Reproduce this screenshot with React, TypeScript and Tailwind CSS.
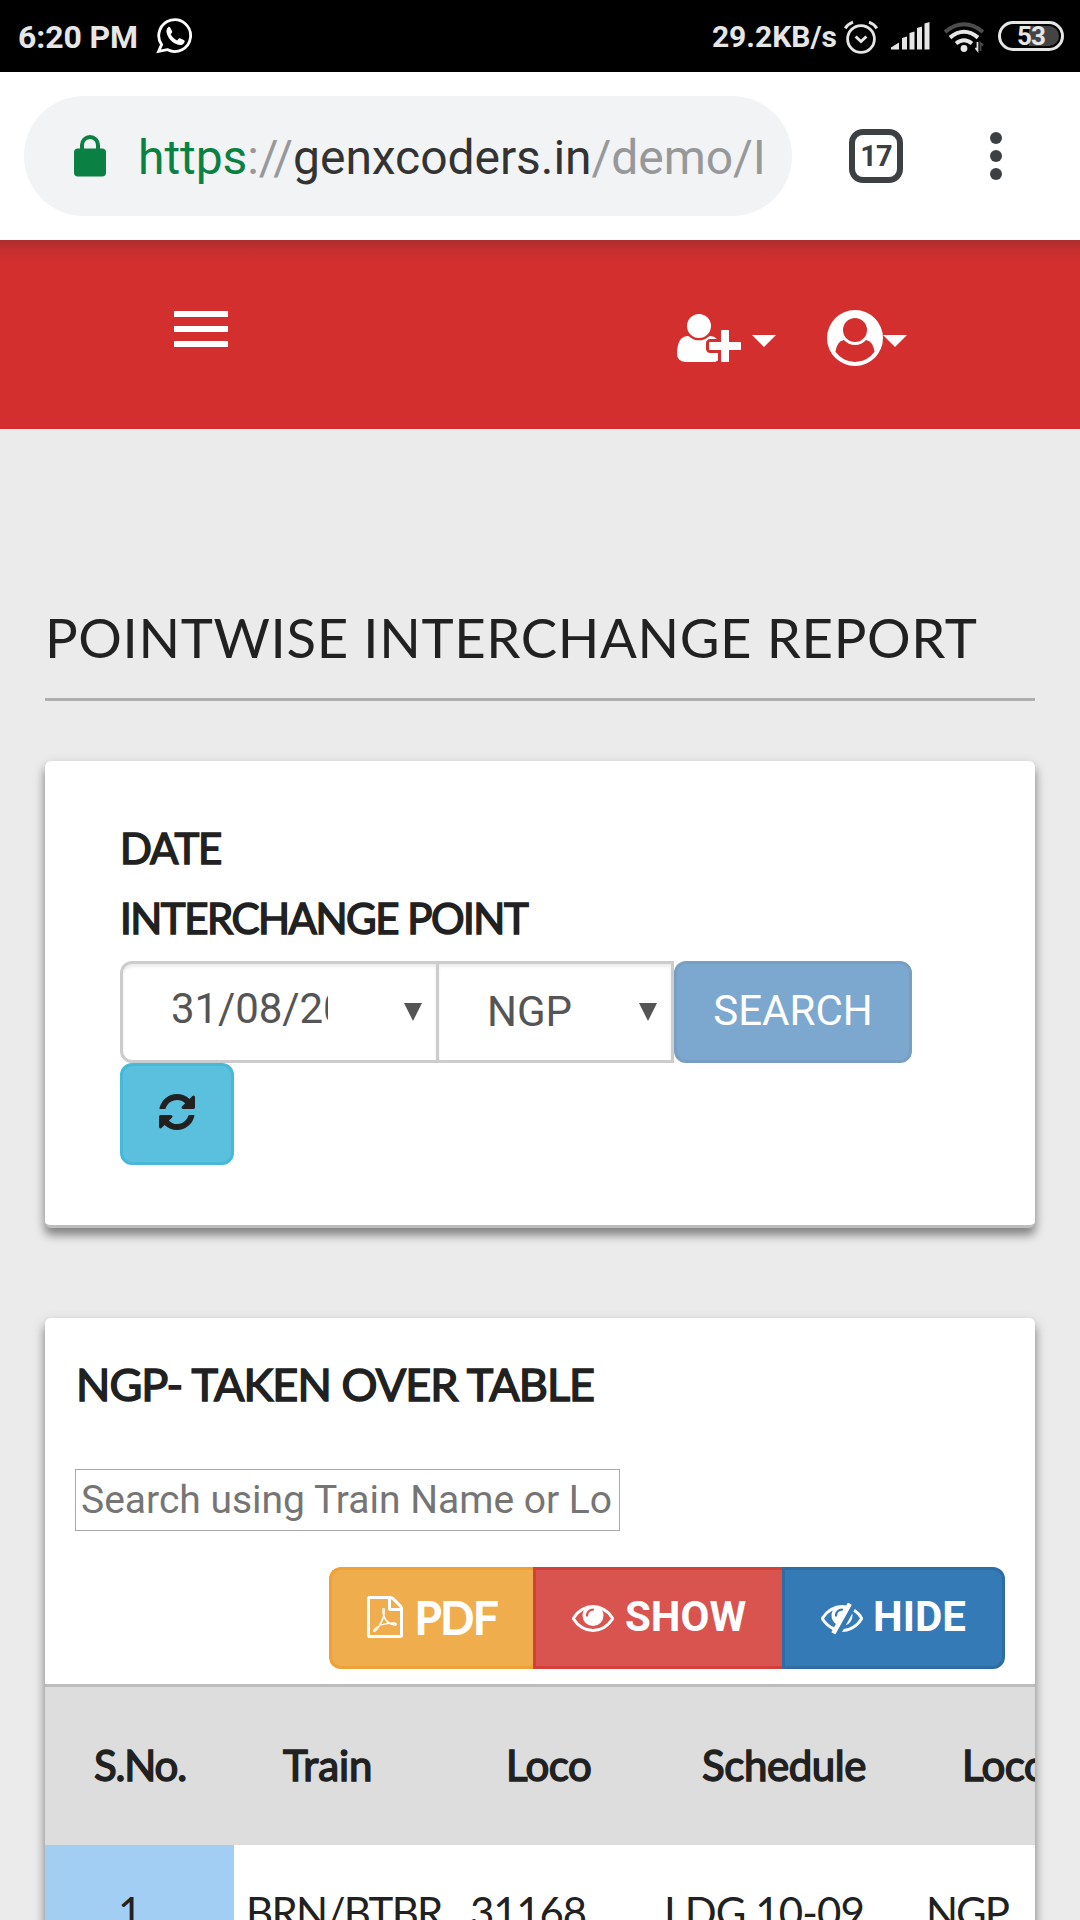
import React from "react";

const ICONS = {
  userPlus:
    "M704 896q-159 0-271.5-112.5t-112.5-271.5 112.5-271.5 271.5-112.5 271.5 112.5 112.5 271.5-112.5 271.5-271.5 112.5zm960 128h352q13 0 22.5 9.5t9.5 22.5v192q0 13-9.5 22.5t-22.5 9.5h-352v352q0 13-9.5 22.5t-22.5 9.5h-192q-13 0-22.5-9.5t-9.5-22.5v-352h-352q-13 0-22.5-9.5t-9.5-22.5v-192q0-13 9.5-22.5t22.5-9.5h352v-352q0-13 9.5-22.5t22.5-9.5h192q13 0 22.5 9.5t9.5 22.5v352zm-736 224q0 52 38 90t90 38h256v238q-68 50-171 50h-874q-121 0-194-69t-73-190q0-53 3.5-103.5t14-109 26.5-108.5 43-97.5 62-81 85.5-53.5 111.5-20q19 0 39 17 79 61 154.5 91.5t164.5 30.5 164.5-30.5 154.5-91.5q20-17 39-17 132 0 217 96h-223q-52 0-90 38t-38 90v192z",
  userCircle:
    "M1523 1339q-22-155-87.5-257.5t-184.5-118.5q-67 74-159.5 115.5t-195.5 41.5-195.5-41.5-159.5-115.5q-119 16-184.5 118.5t-87.5 257.5q106 150 271 237.5t356 87.5 356-87.5 271-237.5zm-243-699q0-159-112.5-271.5t-271.5-112.5-271.5 112.5-112.5 271.5 112.5 271.5 271.5 112.5 271.5-112.5 112.5-271.5zm512 256q0 182-71 347.5t-190.5 286-285.5 191.5-349 71q-182 0-348-71t-286-191-191-286-71-348 71-348 191-286 286-191 348-71 348 71 286 191 191 286 71 348z",
  refresh:
    "M1639 1056q0 5-1 7-64 268-268 434.5t-478 166.5q-146 0-282.5-55t-243.5-157l-129 129q-19 19-45 19t-45-19-19-45v-448q0-26 19-45t45-19h448q26 0 45 19t19 45-19 45l-137 137q71 66 161 102t187 36q134 0 250-65t186-179q11-17 53-117 8-23 30-23h192q13 0 22.5 9.5t9.5 22.5zm25-800v448q0 26-19 45t-45 19h-448q-26 0-45-19t-19-45 19-45l138-138q-148-137-349-137-134 0-250 65t-186 179q-11 17-53 117-8 23-30 23h-199q-13 0-22.5-9.5t-9.5-22.5v-7q65-268 270-434.5t480-166.5q146 0 284 55.5t245 156.5l130-129q19-19 45-19t45 19 19 45z",
  eye: "M1664 960q-152-236-381-353 61 104 61 225 0 185-131.5 316.5t-316.5 131.5-316.5-131.5-131.5-316.5q0-121 61-225-229 117-381 353 133 205 333.5 326.5t434.5 121.5 434.5-121.5 333.5-326.5zm-720-384q0-20-14-34t-34-14q-125 0-214.5 89.5t-89.5 214.5q0 20 14 34t34 14 34-14 14-34q0-86 61-147t147-61q20 0 34-14t14-34zm848 384q0 34-20 69-140 230-376.5 368.5t-499.5 138.5-499.5-139-376.5-368q-20-35-20-69t20-69q140-229 376.5-368t499.5-139 499.5 139 376.5 368q20 35 20 69z",
  eyeSlash:
    "M555 1335l78-141q-87-63-136-159t-49-203q0-121 61-225-229 117-381 353 167 258 427 375zm389-759q0-20-14-34t-34-14q-125 0-214.5 89.5t-89.5 214.5q0 20 14 34t34 14 34-14 14-34q0-86 61-147t147-61q20 0 34-14t14-34zm363-191q0 7-1 9-106 189-316 567t-315 566l-49 89q-10 16-28 16-12 0-134-70-16-10-16-28 0-12 44-87-143-65-263.5-173t-208.5-245q-20-31-20-69t20-69q153-235 380-371t496-136q89 0 180 17l54-97q10-16 28-16 5 0 18 6t31 15.5 33 18.5 31.5 18.5 19.5 11.5q16 10 16 27zm37 447q0 139-79 253.5t-209 164.5l280-502q8 45 8 84zm448 128q0 35-20 69-39 64-109 145-150 172-347.5 267t-419.5 95l74-132q212-18 392.5-137t301.5-307q-115-179-282-294l63-112q95 64 182.5 153t144.5 184q20 34 20 69z",
  pdf: "M1596 380q28 28 48 76t20 88v1152q0 40-28 68t-68 28h-1344q-40 0-68-28t-28-68v-1600q0-40 28-68t68-28h896q40 0 88 20t76 48zm-444-244v376h376q-10-29-22-41l-313-313q-12-12-41-22zm384 1528v-1024h-416q-40 0-68-28t-28-68v-416h-768v1536h1280zm-514-593q33 26 84 56 59-7 117-7 147 0 177 49 16 22 2 52 0 1-1 2l-2 2v1q-6 38-71 38-48 0-115-20t-130-53q-221 24-392 83-153 262-242 262-15 0-28-7l-24-12q-1-1-6-5-10-10-6-36 9-40 56-91.5t132-96.5q14-9 23 6 2 2 2 4 52-85 107-197 68-136 104-262-24-82-30.5-159.5t6.5-127.5q11-40 42-40h22q23 0 35 15 18 21 9 68-2 6-4 8 1 3 1 8v30q-2 123-14 192 55 164 146 238zm-576 411q52-24 137-158-51 40-87.5 84t-49.5 74zm398-920q-15 42-2 132 1-7 7-44 0-3 7-43 1-4 4-8-1-1-1-2-1-2-1-3-1-22-13-36 0 1-1 2v2zm-124 661q135-54 284-81-2-1-13-9.5t-16-13.5q-76-67-127-176-27 86-83 197-30 56-45 83zm646-16q-24-24-140-24 76 28 124 28 14 0 18-1 0-1-2-3z",
};

function Glyph({ name, className, wide = false }: { name: keyof typeof ICONS; className: string; wide?: boolean }) {
  return (
    <svg viewBox={wide ? "0 0 2048 1792" : "0 0 1792 1792"} className={"shrink-0 " + className} fill="currentColor">
      <path d={ICONS[name]} fillRule="evenodd" />
    </svg>
  );
}

function StatusBar() {
  return (
    <div className="flex h-[72px] items-center bg-black pt-px pl-[18px] pr-4 font-bold text-[#e6e6e6]">
      <span className="text-[32px] leading-none tracking-[-0.1px]">6:20 PM</span>
      <svg viewBox="0 0 38 38" className="mt-[-3px] ml-[18px] h-[38px] w-[38px]" fill="none">
        <path
          d="M5.6 28.6A15.9 15.9 0 1 1 11.2 33.6L2.6 35.4Z"
          stroke="#fff"
          strokeWidth="2.8"
          strokeLinejoin="miter"
        />
        <path
          fill="#fff"
          d="M12.2 11.2c.7-.7 1.6-.6 2 .2l1.9 3.9c.3.7.1 1.3-.4 1.8l-1 1.2c1.400 2.800 3.500 4.800 6.400 6.100l1.400-1.600c.5-.6 1.100-.7 1.800-.4l3.500 1.700c.8.4.9 1 .7 1.800-.6 2.100-2.500 3.300-4.700 3.100-6.700-.8-12.400-6.500-13.300-12.900-.3-2 .3-3.700 1.700-4.900z"
        />
      </svg>
      <div className="ml-auto flex items-center">
        <span className="text-[30px] leading-none">29.2KB/s</span>
        <svg viewBox="0 0 36 36" className="ml-[6px] h-9 w-9" fill="none" stroke="#e6e6e6">
          <circle cx="18" cy="20" r="13.400" strokeWidth="2.8" />
          <path d="M12.600 17.500l5.400 5 5.400-5" strokeWidth="3" />
          <path d="M2.200 9.400Q5 5 10 3.200M33.800 9.400Q31 5 26 3.200" strokeWidth="3" />
        </svg>
        <svg viewBox="0 0 40 28" className="mt-[-2px] ml-[12px] h-7 w-10" fill="#e6e6e6">
          <path d="M0 27.500v-2l8-5v7zM11 27.500V16l5-1.500v13zM18.500 27.500V11l5-1.500v18zM26 27.500V6l5-1.500v23zM33.500 27.500V1.500l5-1.500v27.500z" />
        </svg>
        <svg viewBox="0 0 42 34" className="ml-[12px] h-[34px] w-[42px]" fill="none">
          <path d="M2 12Q21-3.500 40 12" stroke="#4d4d4d" strokeWidth="4" />
          <path d="M7 17.600Q21 6 35 17.600M13 23.500Q21 17 29 23.500" stroke="#e6e6e6" strokeWidth="4" />
          <circle cx="21" cy="28.500" r="3.400" fill="#e6e6e6" />
          <path d="M34.500 22v8.500l-2-2.500" stroke="#e6e6e6" strokeWidth="1.800" />
          <path d="M37.500 31v-8l2.500 2.500" stroke="#4d4d4d" strokeWidth="1.800" />
        </svg>
        <div className="mt-[-2px] ml-[13px] flex h-[30px] w-[66px] items-center justify-center rounded-full border-[3.500px] border-[#e6e6e6] bg-black p-[2px]">
          <div className="flex h-full w-full items-center justify-center rounded-full bg-[linear-gradient(90deg,#000_46%,#444_46%)]">
            <span className="text-[26px] leading-none tracking-[-1px]">53</span>
          </div>
        </div>
      </div>
    </div>
  );
}

function BrowserBar() {
  return (
    <div className="flex h-[168px] items-center bg-white pl-6">
      <div className="flex h-[120px] w-[768px] items-center rounded-full bg-[#f1f3f4] pl-[50px]">
        <svg viewBox="0 0 32 43" className="mt-[-1px] h-[43px] w-8" fill="none">
          <path d="M8 16V11a8 8 0 0 1 16 0v5" stroke="#0b8043" strokeWidth="4" />
          <rect x="0" y="14.500" width="32" height="28" rx="4" fill="#0b8043" />
        </svg>
        <div className="mt-[3px] ml-[32px] text-[48px] leading-none tracking-[-0.06px] whitespace-nowrap text-[#333]">
          <span className="text-[#0b8043]">https</span>
          <span className="text-[#979899]">://</span>genxcoders.in<span className="text-[#979899]">/demo/I</span>
        </div>
      </div>
      <div className="ml-[57px] flex h-[54px] w-[54px] items-center justify-center rounded-[14px] border-[6px] border-[#3c4043] text-[29px] leading-none font-bold tracking-[-1px] text-[#3c4043]">
        17
      </div>
      <div className="ml-[87px] flex flex-col gap-[6px]">
        <i className="h-3 w-3 rounded-full bg-[#3c4043]" />
        <i className="h-3 w-3 rounded-full bg-[#3c4043]" />
        <i className="h-3 w-3 rounded-full bg-[#3c4043]" />
      </div>
    </div>
  );
}

function Caret() {
  return (
    <svg viewBox="0 0 24 12" className="h-3 w-6" fill="currentColor">
      <path d="M0 0h24L12 12z" />
    </svg>
  );
}

function SiteHeader() {
  return (
    <header className="flex h-[189px] items-start bg-[#d32f2f] bg-[linear-gradient(180deg,rgba(60,40,50,0.25),rgba(60,40,50,0.08)_10px,transparent_24px)] bg-no-repeat text-white">
      <div className="mt-[71px] ml-[174px] flex w-[54px] flex-col gap-[9px]">
        <i className="h-[6px] bg-white" />
        <i className="h-[6px] bg-white" />
        <i className="h-[6px] bg-white" />
      </div>
      <div className="mt-[70px] ml-[449px] flex h-14 items-center">
        <Glyph name="userPlus" wide className="h-14 w-16" />
        <div className="mt-[6px] ml-[11px]">
          <Caret />
        </div>
        <Glyph name="userCircle" className="ml-[51px] h-14 w-14" />
        <div className="mt-[6px]">
          <Caret />
        </div>
      </div>
    </header>
  );
}

function SearchCard() {
  return (
    <section className="mt-[60px] h-[467px] rounded-[6px] border-b-[3px] border-[#bdbdbd] bg-white px-[75px] pt-[52px] shadow-[0_7px_8px_rgba(0,0,0,0.33),0_5px_14px_rgba(0,0,0,0.2)]">
      <div className="font-[Lato] text-[42px] leading-[70px] text-[#212121] [-webkit-text-stroke:1.500px_#212121]">
        <div className="tracking-[-1.100px]">DATE</div>
        <div className="tracking-[-1.500px]">INTERCHANGE POINT</div>
      </div>
      <div className="mt-[8px] flex flex-wrap text-[42px] text-[#555]">
        <div className="flex h-[102px] w-[319px] items-center rounded-l-[12px] border-[3px] border-[#ccc] pr-[14px] pl-[48px] shadow-[inset_0_3px_3px_rgba(0,0,0,0.075)]">
          <div className="mb-[8px] w-[157px] overflow-hidden tracking-[-0.1px] whitespace-nowrap">31/08/2018</div>
          <svg viewBox="0 0 18 18" className="ml-auto h-[18px] w-[18px]" fill="#555">
            <path d="M0 0h18L9 18z" />
          </svg>
        </div>
        <div className="ml-[-3px] flex h-[102px] w-[238px] items-center border-[3px] border-[#ccc] pr-[14px] pl-[48px] shadow-[inset_0_3px_3px_rgba(0,0,0,0.075)]">
          <div className="mb-[2px]">NGP</div>
          <svg viewBox="0 0 18 18" className="ml-auto h-[18px] w-[18px]" fill="#555">
            <path d="M0 0h18L9 18z" />
          </svg>
        </div>
        <div className="flex h-[102px] w-[238px] items-center justify-center rounded-[12px] border-[3px] border-[#779fc4] bg-[#7ca8d0] pb-[3px] text-white">
          SEARCH
        </div>
        <div className="flex h-[102px] w-[114px] items-center justify-center rounded-[12px] border-[3px] border-[#46b8da] bg-[#5bc0de] pb-[4px] text-[#212121]">
          <Glyph name="refresh" className="h-[42px] w-[42px]" />
        </div>
      </div>
    </section>
  );
}

function ResultsCard() {
  return (
    <section className="mt-[90px] h-[700px] overflow-hidden rounded-[6px] bg-white">
      <div className="px-[30px] pt-[36px]">
        <h2 className="pl-px font-[Lato] text-[45px] leading-[60px] tracking-[-0.93px] text-[#212121] [-webkit-text-stroke:1.500px_#212121]">
          NGP- TAKEN OVER TABLE
        </h2>
        <div className="mt-[55px] flex h-[62px] w-[545px] items-center border border-[#a9a9a9] pl-[5px] text-[39px] whitespace-nowrap text-[#757575]">
          Search using Train Name or Lo
        </div>
        <div className="mt-[36px] flex h-[102px] justify-end text-[42px] font-bold text-white">
          <div className="flex w-[204px] items-center rounded-l-[12px] border-[3px] border-r-0 border-[#eea236] bg-[#f0ad4e] pb-[3px] pl-[32px]">
            <Glyph name="pdf" className="h-[42px] w-[42px]" />
            <span className="ml-[9px] font-[Lato] text-[44px] font-normal tracking-[-0.8px] [-webkit-text-stroke:2px_#fff]">
              PDF
            </span>
          </div>
          <div className="flex w-[249px] items-center border-[3px] border-r-0 border-[#d43f3a] bg-[#d9534f] pb-[3px] pl-[36px]">
            <Glyph name="eye" className="h-[42px] w-[42px]" />
            <span className="ml-[11px]">SHOW</span>
          </div>
          <div className="flex w-[223px] items-center rounded-r-[12px] border-[3px] border-[#2e6da4] bg-[#337ab7] pb-[3px] pl-[36px]">
            <Glyph name="eyeSlash" className="h-[42px] w-[42px]" />
            <span className="ml-[10px]">HIDE</span>
          </div>
        </div>
      </div>
      <div className="mt-[15px] font-[Lato] text-[42px] whitespace-nowrap text-[#212121]">
        <div className="grid h-[161px] grid-cols-[189px_216px_185px_265px_300px] items-center border-t-[3px] border-[#bdbdbd] bg-[#ddd] pb-[2px] [-webkit-text-stroke:1.500px_#212121]">
          <span className="pl-[49px] tracking-[-1.200px]">S.No.</span>
          <span className="pl-[49px] tracking-[0px]">Train</span>
          <span className="pl-[56px] tracking-[-0.5px]">Loco</span>
          <span className="pl-[67px] tracking-[-0.400px]">Schedule</span>
          <span className="pl-[62px] tracking-[-0.5px]">Loco</span>
        </div>
        <div className="grid h-[135px] grid-cols-[189px_216px_185px_265px_300px] leading-[135px]">
          <span className="bg-[#a2cef3] pl-[73px]">1</span>
          <span className="pl-[12px] tracking-[-1.700px]">BRN/BTBR</span>
          <span className="pl-[20px] tracking-[-1.200px]">31168</span>
          <span className="pl-[29px] tracking-[-0.9px]">LDG 10-09</span>
          <span className="pl-[26px] tracking-[-2px]">NGP</span>
        </div>
      </div>
    </section>
  );
}

export default function App() {
  return (
    <div className="h-[1920px] w-[1080px] overflow-hidden bg-[#ebebeb] font-[Roboto,sans-serif]">
      <StatusBar />
      <BrowserBar />
      <SiteHeader />
      <main className="px-[45px] pt-[168px]">
        <h1 className="h-[104px] border-b-[3px] border-[#aeaeae] font-[Lato] text-[54.500px] leading-[80px] tracking-[0.620px] whitespace-nowrap text-[#212121]">
          POINTWISE INTERCHANGE REPORT
        </h1>
        <SearchCard />
        <div className="rounded-[6px] shadow-[0_7px_8px_rgba(0,0,0,0.33),0_5px_14px_rgba(0,0,0,0.2)]">
          <ResultsCard />
        </div>
      </main>
    </div>
  );
}
